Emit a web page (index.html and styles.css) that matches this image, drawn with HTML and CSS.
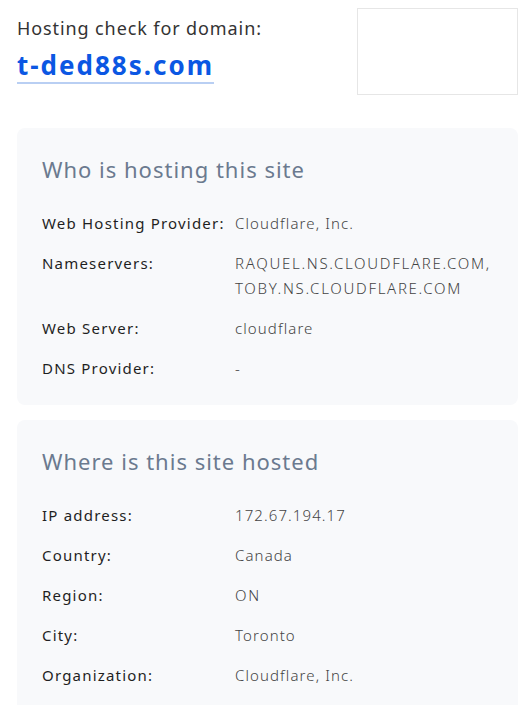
FILE: index.html
```html
<!DOCTYPE html>
<html lang="en">
<head>
<meta charset="utf-8">
<title>Hosting check</title>
<link rel="stylesheet" href="styles.css">
</head>
<body>
<div class="page">
  <header class="top">
    <div class="intro">
      <div class="lead">Hosting check for domain:</div>
      <a class="domain" href="#">t-ded88s.com</a>
    </div>
    <div class="shot"></div>
  </header>

  <section class="card">
    <h2 class="card-title">Who is hosting this site</h2>
    <div class="rows">
      <div class="row"><div class="label">Web Hosting Provider:</div><div class="value">Cloudflare, Inc.</div></div>
      <div class="row"><div class="label">Nameservers:</div><div class="value caps">RAQUEL.NS.CLOUDFLARE.COM,<br>TOBY.NS.CLOUDFLARE.COM</div></div>
      <div class="row"><div class="label">Web Server:</div><div class="value">cloudflare</div></div>
      <div class="row"><div class="label">DNS Provider:</div><div class="value">-</div></div>
    </div>
  </section>

  <section class="card">
    <h2 class="card-title">Where is this site hosted</h2>
    <div class="rows">
      <div class="row"><div class="label">IP address:</div><div class="value">172.67.194.17</div></div>
      <div class="row"><div class="label">Country:</div><div class="value">Canada</div></div>
      <div class="row"><div class="label">Region:</div><div class="value caps">ON</div></div>
      <div class="row"><div class="label">City:</div><div class="value">Toronto</div></div>
      <div class="row"><div class="label">Organization:</div><div class="value">Cloudflare, Inc.</div></div>
    </div>
  </section>
</div>
</body>
</html>
```

FILE: styles.css
```css
html, body {
  margin: 0;
  padding: 0;
  background: #ffffff;
}
body {
  font-family: "Noto Sans", "DejaVu Sans", sans-serif;
  color: #222;
}
.page {
  padding: 8px 8px 0 17px;
  display: flex;
  flex-direction: column;
  gap: 15px;
}
.top {
  display: flex;
  justify-content: space-between;
  align-items: flex-start;
  margin-bottom: 18px;
}
.intro {
  display: flex;
  flex-direction: column;
  padding-top: 7px;
}
.lead {
  font-size: 18px;
  line-height: 26px;
  letter-spacing: 0.9px;
  color: #333;
}
.domain {
  font-size: 26px;
  font-weight: 700;
  line-height: 33px;
  letter-spacing: 2px;
  color: #0b57e3;
  text-decoration: none;
  border-bottom: 2px solid #b9cff3;
  align-self: flex-start;
  margin-top: 8px;
}
.shot {
  width: 159px;
  height: 85px;
  border: 1px solid #e6e6e6;
  background: #fff;
}
.card {
  background: #f8f9fb;
  border-radius: 8px;
  padding: 26px 25px 24px 25px;
}
.card-title {
  margin: 0 0 27px 0;
  font-size: 22px;
  line-height: 30px;
  font-weight: 400;
  letter-spacing: 1px;
  color: #6b7a8f;
}
.rows {
  display: flex;
  flex-direction: column;
  gap: 15px;
}
.row {
  display: grid;
  grid-template-columns: 193px 1fr;
  font-size: 15px;
  line-height: 25px;
}
.label {
  color: #1f1f1f;
  font-weight: 400;
  letter-spacing: 1.2px;
}
.value {
  color: #444;
  font-weight: 300;
  letter-spacing: 1.1px;
}
.value.caps {
  letter-spacing: 1.7px;
}
```
